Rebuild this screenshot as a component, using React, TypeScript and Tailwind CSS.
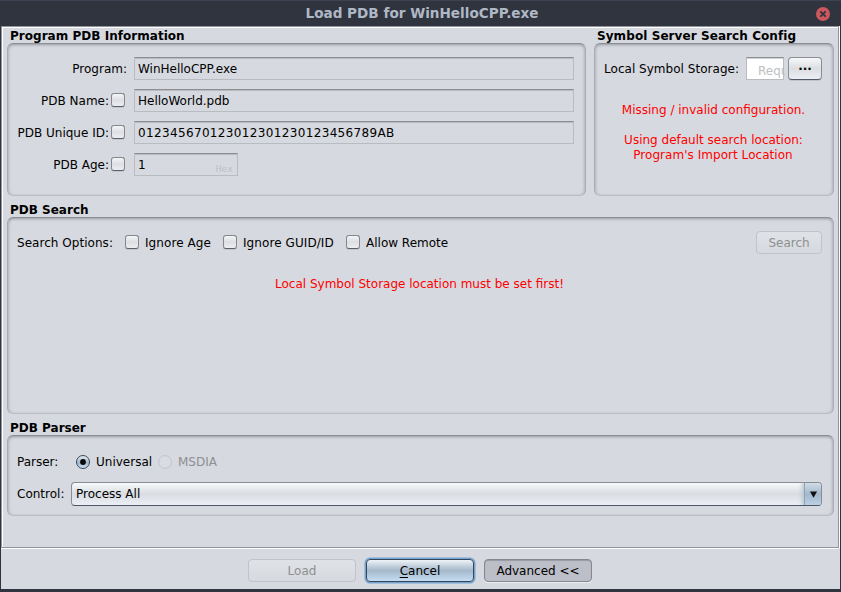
import React from "react";

const insetBox =
  "rounded-[6px] border border-[#a9acb1] border-t-[#8b8e93] border-b-[#b9bcc0] shadow-[inset_0_2px_3px_-1px_#9b9ea4,inset_2px_0_3px_-1px_#b9bcc2,inset_-2px_0_3px_-1px_#b9bcc2]";

function Group({ title, box, spacing = "", children }: { title: string; box: string; spacing?: string; children: React.ReactNode }) {
  return (
    <section className="flex flex-col">
      <h2 className={`h-[15px] pl-[3px] text-[12px] leading-[17px] font-bold whitespace-nowrap ${spacing}`}>{title}</h2>
      <div className={`${insetBox} ${box}`}>{children}</div>
    </section>
  );
}

function Check() {
  return (
    <span className="mb-px block h-[14px] w-[14px] shrink-0 rounded-[3px] border border-[#85878d] border-b-[#5b6070] bg-linear-to-b from-[#f4f5f7] via-[#dcdee2] to-[#eceef3] shadow-[0_1px_0_#c3c6cb]" />
  );
}

function Radio({ selected = false }: { selected?: boolean }) {
  return selected ? (
    <svg width="15" height="15" viewBox="0 0 15 15" className="shrink-0">
      <defs>
        <linearGradient id="radioFill" x1="0" y1="0" x2="0" y2="1">
          <stop offset="0" stopColor="#e9eff5" />
          <stop offset="0.55" stopColor="#a5b8ca" />
          <stop offset="1" stopColor="#cfe2f4" />
        </linearGradient>
      </defs>
      <circle cx="7" cy="7" r="6.5" fill="url(#radioFill)" stroke="#36485c" />
      <circle cx="7" cy="7" r="2.9" fill="#080a0c" />
    </svg>
  ) : (
    <svg width="15" height="15" viewBox="0 0 15 15" className="shrink-0">
      <circle cx="7" cy="7" r="6.4" fill="#d9dce1" stroke="#c1c4ca" />
    </svg>
  );
}

function InfoRow({ label, check, value, field = "w-[440px]", valueSpacing = "", hex }: { label: string; check?: boolean; value: string; field?: string; valueSpacing?: string; hex?: boolean }) {
  return (
    <div className="flex h-[23px] items-center">
      <div className="flex w-[126px] items-center justify-end">
        <span className="pt-[2px] whitespace-nowrap">{label}</span>
        {check ? <span className="mr-[9px] mb-px ml-[2px]"><Check /></span> : <span className="w-[7px]" />}
      </div>
      <div className={`flex h-[23px] items-center justify-between border border-[#b8bbbf] border-t-[#8d8f93] pl-[3px] shadow-[inset_0_1px_0_#b8babf] ${field}`}>
        <span className={`pt-[2px] ${valueSpacing}`}>{value}</span>
        {hex && <span className="mt-[8px] mr-[4px] font-['DejaVu_Sans_Mono',monospace] text-[9.5px] text-[#bdc0c4]">Hex</span>}
      </div>
    </div>
  );
}

function Option({ label, spacing = "" }: { label: string; spacing?: string }) {
  return (
    <label className="flex items-center gap-[6px] whitespace-nowrap">
      <Check />
      <span className={`pt-px ${spacing}`}>{label}</span>
    </label>
  );
}

const button = "flex items-center justify-center rounded-[4px] border h-[23px]";
const disabled = "border-[#c0c3c9] bg-linear-to-b from-[#dfe2e6] to-[#d6d9de] text-[#8e8f91]";

export default function App() {
  return (
    <div className="flex h-[592px] w-[841px] flex-col overflow-hidden bg-[#2f343f] font-['DejaVu_Sans',sans-serif] text-[12px] leading-[15px] text-black">
      <header className="flex h-[26px] shrink-0 items-center border-t border-[#3d4352]">
        <span className="w-[28px]" />
        <h1 className="flex-1 text-center text-[13.6px] font-bold text-[#afb8c5]">Load PDB for WinHelloCPP.exe</h1>
        <svg width="14" height="14" viewBox="0 0 14 14" className="mr-[11px] shrink-0">
          <circle cx="7" cy="7" r="7" fill="#cc575d" />
          <path d="M4.3 4.3l5.4 5.4m0-5.4l-5.4 5.4" stroke="#2f343f" strokeWidth="1.8" />
        </svg>
      </header>

      <div className="ml-px flex h-[563px] w-[839px] flex-col bg-[#d6d9df]">
        <main className="flex h-[522px] w-[838px] flex-col border border-[#92959b] shadow-[inset_1px_1px_0_white,0_1px_0_white,1px_0_0_white]">
          <div className="flex gap-[8px] pt-px pl-[5px]">
            <Group title="Program PDB Information" box="h-[153px] w-[579px]" spacing="tracking-[0.03px]">
              <div className="flex flex-col gap-[9px] pt-[13px]">
                <InfoRow label="Program:" value="WinHelloCPP.exe" />
                <InfoRow label="PDB Name:" value="HelloWorld.pdb" check />
                <InfoRow label="PDB Unique ID:" value="012345670123012301230123456789AB" valueSpacing="tracking-[0.35px]" check />
                <InfoRow label="PDB Age:" value="1" field="w-[104px]" check hex />
              </div>
            </Group>
            <Group title="Symbol Server Search Config" box="h-[153px] w-[240px]" spacing="tracking-[0.08px]">
              <div className="flex items-center pt-[13px] pl-[9px]">
                <span className="w-[142px] pt-[2px] tracking-[0.03px] whitespace-nowrap">Local Symbol Storage:</span>
                <div className="h-[23px] w-[38px] border border-[#b8bbbf] border-t-[#8d8f93] bg-white pt-[5px] pl-[11px] text-[#bdbfc2] shadow-[inset_0_1px_0_#d0d1d4]">
                  <span className="block w-[27px] overflow-hidden leading-[17px]">Requ</span>
                </div>
                <div className={`${button} ml-[4px] w-[34px] border-[#8a8d94] border-b-[#545967] bg-linear-to-b from-[#f7f8fa] via-[#dcdee2] to-[#eceef3] pb-[5px] font-bold shadow-[0_1px_0_#c0c3c8]`}>...</div>
              </div>
              <div className="pt-[23px] pr-px text-center text-[#ff0000]">
                <p>Missing / invalid configuration.</p>
                <p className="pt-[15px]">Using default search location:</p>
                <p className="pr-px tracking-[0.04px]">Program's Import Location</p>
              </div>
            </Group>
          </div>

          <div className="pt-[6px] pl-[5px]">
            <Group title="PDB Search" box="h-[197px] w-[827px]">
              <div className="flex items-center pt-[13px] pr-[11px] pl-[9px]">
                <span className="w-[108px] pt-[2px] tracking-[0.04px] whitespace-nowrap">Search Options:</span>
                <div className="flex">
                  <div className="w-[98px]"><Option label="Ignore Age" spacing="tracking-[0.08px]" /></div>
                  <div className="w-[123px]"><Option label="Ignore GUID/ID" spacing="tracking-[0.08px]" /></div>
                  <Option label="Allow Remote" />
                </div>
                <div className={`${button} ${disabled} ml-auto w-[66px] pt-[2px]`}>Search</div>
              </div>
              <p className="pt-[23px] pr-[2px] text-center text-[#ff0000]">Local Symbol Storage location must be set first!</p>
            </Group>
          </div>

          <div className="pt-[6px] pl-[5px]">
            <Group title="PDB Parser" box="h-[81px] w-[827px]">
              <div className="flex items-center pt-[18px] pl-[9px]">
                <span className="w-[59px] pt-px">Parser:</span>
                <Radio selected />
                <span className="ml-[5px] w-[62px] pt-px">Universal</span>
                <Radio />
                <span className="ml-[5px] pt-px text-[#8e8f91]">MSDIA</span>
              </div>
              <div className="flex items-center pt-[12px] pl-[9px]">
                <span className="w-[54px] pt-px">Control:</span>
                <div className="flex h-[24px] w-[751px] items-center overflow-hidden rounded-[4px] border border-[#898c93] border-b-[#4f5564] bg-linear-to-b from-[#f8f9fb] via-[#d9dce1] to-[#eceff5]">
                  <span className="pt-px pl-[4px]">Process All</span>
                  <div className="ml-auto flex h-[24px] w-[17px] items-center justify-center border-l border-[#8fa3b6] bg-linear-to-b from-[#d5e0ea] via-[#a3b8cc] to-[#bdd3e8] shadow-[-2px_0_4px_#b9c5d1]">
                    <svg width="7" height="7" viewBox="0 0 7 7"><path d="M0 .5h7L3.5 6.7z" fill="#111" /></svg>
                  </div>
                </div>
              </div>
            </Group>
          </div>
        </main>

        <footer className="flex items-start gap-[10px] pt-[11px] pl-[247px]">
          <div className={`${button} ${disabled} w-[108px] pt-[2px]`}>Load</div>
          <div className={`${button} w-[108px] border-[#33465b] bg-linear-to-b from-[#eef3f7] via-[#a5b9cb] to-[#c5ddf3] pt-[2px] shadow-[0_0_0_1.5px_#73a4d1]`}>
            <span className="underline underline-offset-2">C</span>ancel
          </div>
          <div className={`${button} w-[108px] border-[#85888f] bg-[#bdbfc8] pt-[2px] shadow-[inset_0_1px_1px_#989ba3,0_1px_0_#eceef1]`}>Advanced &lt;&lt;</div>
        </footer>
      </div>
    </div>
  );
}
